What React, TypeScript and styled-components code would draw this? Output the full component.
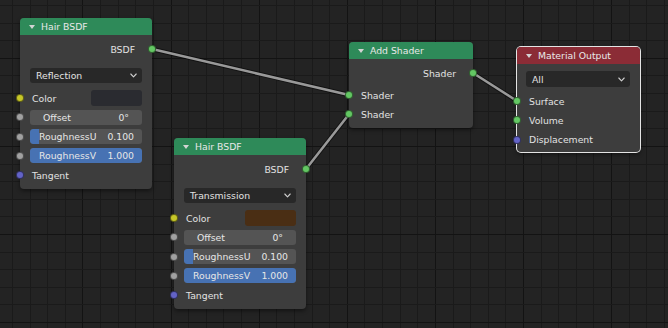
import React from "react";
import styled, { createGlobalStyle } from "styled-components";

const GlobalStyle = createGlobalStyle`
  html, body {
    margin: 0;
    padding: 0;
    background: #232323;
  }
`;

const SOCKET = {
  shader: "#63c763",
  color: "#c7c729",
  float: "#a1a1a1",
  vector: "#6363c7",
};

const Canvas = styled.div`
  position: relative;
  width: 668px;
  height: 328px;
  overflow: hidden;
  background: #232323;
  font-family: "DejaVu Sans", "Liberation Sans", sans-serif;
  font-size: 9.3px;
  color: #e2e2e2;
`;

const Backdrop = styled.svg`
  position: absolute;
  inset: 0;
`;

const Node = styled.div<{ $x: number; $y: number; $w: number; $active?: boolean }>`
  position: absolute;
  left: ${(p) => p.$x}px;
  top: ${(p) => p.$y}px;
  width: ${(p) => p.$w}px;
  background: #3d3d3d;
  border-radius: 4px;
  box-shadow: ${(p) =>
    p.$active
      ? "0 0 0 1px #e4e4e4, 0 2px 4px rgba(0, 0, 0, 0.5)"
      : "0 2px 4px rgba(0, 0, 0, 0.45)"};
`;

const Header = styled.div<{ $color: string }>`
  height: 17px;
  display: flex;
  align-items: center;
  gap: 6px;
  padding-left: 9px;
  background: ${(p) => p.$color};
  border-radius: 4px 4px 0 0;
  color: #e8e8e8;
`;

const Collapse = styled.span`
  width: 0;
  height: 0;
  border-left: 3px solid transparent;
  border-right: 3px solid transparent;
  border-top: 4px solid #d4d4d4;
`;

const Body = styled.div<{ $pt: number; $pb: number }>`
  display: flex;
  flex-direction: column;
  padding: ${(p) => p.$pt}px 0 ${(p) => p.$pb}px;
`;

const OutRow = styled.div`
  position: relative;
  height: 18px;
  display: flex;
  align-items: center;
  justify-content: flex-end;
  padding-right: 17px;
`;

const InputList = styled.div<{ $mt: number }>`
  display: flex;
  flex-direction: column;
  margin-top: ${(p) => p.$mt}px;
`;

const InRow = styled.div`
  position: relative;
  height: 19.25px;
  display: flex;
  align-items: center;
  padding: 0 10px 0 12px;
`;

const FieldRow = styled(InRow)`
  padding-left: 10px;
`;

const Socket = styled.span<{ $color: string; $side: "in" | "out" }>`
  position: absolute;
  top: 50%;
  ${(p) => (p.$side === "in" ? "left: -4px;" : "right: -4px;")}
  width: 8px;
  height: 8px;
  margin-top: -4px;
  box-sizing: border-box;
  border-radius: 50%;
  background: ${(p) => p.$color};
  border: 0.6px solid rgba(0, 0, 0, 0.5);
`;

const Select = styled.div<{ $mt: number; $ml: number; $h: number }>`
  height: ${(p) => p.$h}px;
  margin: ${(p) => p.$mt}px 10px 0 ${(p) => p.$ml}px;
  display: flex;
  align-items: center;
  justify-content: space-between;
  padding: 0 5px 0 6px;
  background: #282828;
  border-radius: 3px;
`;

const Swatch = styled.span<{ $color: string }>`
  margin-left: auto;
  width: 51px;
  height: 16px;
  border-radius: 3px;
  background: ${(p) => p.$color};
`;

const NumField = styled.div<{ $slider?: boolean }>`
  position: relative;
  flex: 1;
  height: 15px;
  display: flex;
  align-items: center;
  justify-content: space-between;
  padding: ${(p) => (p.$slider ? "0 8px 0 9px" : "0 13px")};
  background: #545454;
  border-radius: 3px;
  overflow: hidden;
`;

const SliderFill = styled.span<{ $full: boolean }>`
  position: absolute;
  left: 0;
  top: 0;
  bottom: 0;
  background: #4772b3;
  border-radius: ${(p) => (p.$full ? "3px" : "3px 0 0 3px")};
`;

const FieldText = styled.span`
  position: relative;
  color: #e6e6e6;
`;

function Chevron() {
  return (
    <svg width="7" height="5" viewBox="0 0 7 5">
      <polyline
        points="0.8,1 3.5,3.8 6.2,1"
        fill="none"
        stroke="#cfcfcf"
        strokeWidth="1.1"
        strokeLinecap="round"
        strokeLinejoin="round"
      />
    </svg>
  );
}

function Backgrid() {
  const pitch = 17.62;
  const cols: React.ReactNode[] = [];
  const rows: React.ReactNode[] = [];
  for (let k = 0; k < 39; k++) {
    const x = Math.round(12 + k * pitch);
    cols.push(
      <rect key={"c" + k} x={x} y={0} width={1} height={328} fill={k % 5 === 4 ? "#131313" : "#1a1a1a"} />
    );
  }
  for (let k = 0; k < 19; k++) {
    const y = Math.round(4.94 + k * pitch);
    rows.push(
      <rect key={"r" + k} x={0} y={y} width={668} height={1} fill={k % 5 === 3 ? "#131313" : "#1a1a1a"} />
    );
  }
  const wires = [
    [152, 49, 349, 95],
    [306, 169, 349, 114.3],
    [473, 73, 517, 101],
  ];
  return (
    <Backdrop width="668" height="328">
      {cols}
      {rows}
      {wires.map(([x1, y1, x2, y2], i) => (
        <g key={i}>
          <line x1={x1} y1={y1} x2={x2} y2={y2} stroke="rgba(0,0,0,0.5)" strokeWidth="4.4" />
          <line x1={x1} y1={y1} x2={x2} y2={y2} stroke="#999999" strokeWidth="2.6" />
        </g>
      ))}
    </Backdrop>
  );
}

interface HairProps {
  x: number;
  y: number;
  mode: string;
  tint: string;
}

const HairBsdf: React.FC<HairProps> = ({ x, y, mode, tint }) => (
  <Node $x={x} $y={y} $w={132}>
    <Header $color="#2e8a59">
      <Collapse />
      Hair BSDF
    </Header>
    <Body $pt={5} $pb={4}>
      <OutRow>
        BSDF
        <Socket $side="out" $color={SOCKET.shader} />
      </OutRow>
      <Select $mt={10} $ml={10} $h={15}>
        {mode}
        <Chevron />
      </Select>
      <InputList $mt={5.5}>
        <InRow>
          <Socket $side="in" $color={SOCKET.color} />
          Color
          <Swatch $color={tint} />
        </InRow>
        <FieldRow>
          <Socket $side="in" $color={SOCKET.float} />
          <NumField>
            <FieldText>Offset</FieldText>
            <FieldText>0°</FieldText>
          </NumField>
        </FieldRow>
        <FieldRow>
          <Socket $side="in" $color={SOCKET.float} />
          <NumField $slider>
            <SliderFill $full={false} style={{ width: "9px" }} />
            <FieldText>RoughnessU</FieldText>
            <FieldText>0.100</FieldText>
          </NumField>
        </FieldRow>
        <FieldRow>
          <Socket $side="in" $color={SOCKET.float} />
          <NumField $slider>
            <SliderFill $full style={{ width: "100%" }} />
            <FieldText>RoughnessV</FieldText>
            <FieldText>1.000</FieldText>
          </NumField>
        </FieldRow>
        <InRow>
          <Socket $side="in" $color={SOCKET.vector} />
          Tangent
        </InRow>
      </InputList>
    </Body>
  </Node>
);

const AddShader: React.FC = () => (
  <Node $x={349} $y={42} $w={124}>
    <Header $color="#2e8a59">
      <Collapse />
      Add Shader
    </Header>
    <Body $pt={5} $pb={4}>
      <OutRow>
        Shader
        <Socket $side="out" $color={SOCKET.shader} />
      </OutRow>
      <InputList $mt={3.4}>
        <InRow>
          <Socket $side="in" $color={SOCKET.shader} />
          Shader
        </InRow>
        <InRow>
          <Socket $side="in" $color={SOCKET.shader} />
          Shader
        </InRow>
      </InputList>
    </Body>
  </Node>
);

const MaterialOutput: React.FC = () => (
  <Node $x={517} $y={47} $w={123} $active>
    <Header $color="#8b2c36">
      <Collapse />
      Material Output
    </Header>
    <Body $pt={7} $pb={2.5}>
      <Select $mt={0} $ml={9} $h={16}>
        All
        <Chevron />
      </Select>
      <InputList $mt={4.5}>
        <InRow>
          <Socket $side="in" $color={SOCKET.shader} />
          Surface
        </InRow>
        <InRow>
          <Socket $side="in" $color={SOCKET.shader} />
          Volume
        </InRow>
        <InRow>
          <Socket $side="in" $color={SOCKET.vector} />
          Displacement
        </InRow>
      </InputList>
    </Body>
  </Node>
);

export default function App() {
  return (
    <>
      <GlobalStyle />
      <Canvas>
        <Backgrid />
        <HairBsdf x={20} y={18} mode="Reflection" tint="#2a2b30" />
        <HairBsdf x={174} y={138} mode="Transmission" tint="#4a2e14" />
        <AddShader />
        <MaterialOutput />
      </Canvas>
    </>
  );
}
